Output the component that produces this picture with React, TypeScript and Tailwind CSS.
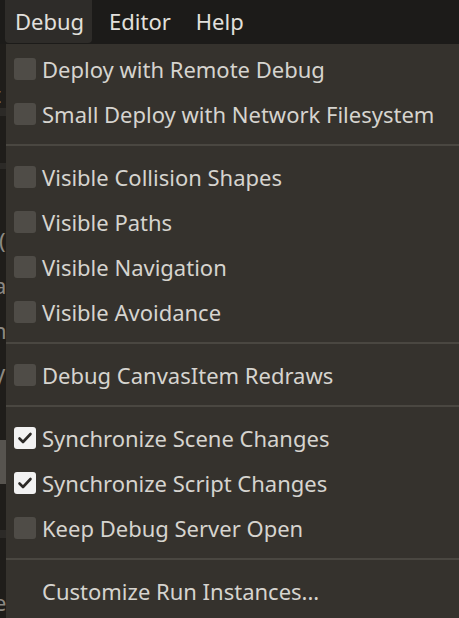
import React from "react";

type Item = { label: string; check?: boolean | null };

const groups: Item[][] = [
  [
    { label: "Deploy with Remote Debug", check: false },
    { label: "Small Deploy with Network Filesystem", check: false },
  ],
  [
    { label: "Visible Collision Shapes", check: false },
    { label: "Visible Paths", check: false },
    { label: "Visible Navigation", check: false },
    { label: "Visible Avoidance", check: false },
  ],
  [{ label: "Debug CanvasItem Redraws", check: false }],
  [
    { label: "Synchronize Scene Changes", check: true },
    { label: "Synchronize Script Changes", check: true },
    { label: "Keep Debug Server Open", check: false },
  ],
  [{ label: "Customize Run Instances...", check: null }],
];

function Box({ checked }: { checked: boolean }) {
  if (checked) {
    return (
      <div className="w-[22px] h-[22px] rounded-[3px] bg-[#f2f2f2] flex items-center justify-center">
        <svg width="16" height="16" viewBox="0 0 16 16">
          <path d="M2.5 8.5 L6 12 L13.5 4" fill="none" stroke="#2b2926" strokeWidth="2.6" strokeLinecap="round" strokeLinejoin="round" />
        </svg>
      </div>
    );
  }
  return <div className="w-[22px] h-[22px] rounded-[3px] bg-[#4f4c47]" />;
}

export default function App() {
  return (
    <div
      className="relative w-[459px] h-[618px] overflow-hidden bg-[#1f1d1a] text-[#d6d4cf]"
      style={{ fontFamily: '"Noto Sans", "Open Sans", sans-serif' }}
    >
      {/* background fragments behind the menu */}
      <div className="absolute left-0 top-[60px] w-[6px] h-[560px] overflow-hidden text-[22px] text-[#8c8983]">
        <div className="absolute top-[18px] left-[-7px]">t</div>
        <div className="absolute top-[48px] left-0 w-[6px] h-[8px] bg-[#2c2a27]" />
        <div className="absolute top-[103px] left-0 w-[6px] h-[6px] bg-[#2c2a27]" />
        <div className="absolute top-[164px] left-[-1px]">(</div>
        <div className="absolute top-[209px] left-[-6px]">a</div>
        <div className="absolute top-[254px] left-[-7px]">n</div>
        <div className="absolute top-[300px] left-[-8px]">V</div>
        <div className="absolute top-[380px] left-0 w-[6px] h-[44px] bg-[#57544f]" />
        <div className="absolute top-[470px] left-0 w-[6px] h-[8px] bg-[#2c2a27]" />
        <div className="absolute top-[526px] left-[-6px]">e</div>
      </div>

      {/* menu bar */}
      <div className="relative h-[44px] bg-[#1c1b19] flex items-start pl-[5px] text-[22px] text-[#e2e0dc]">
        <div className="h-[43px] w-[87px] rounded-b-[4px] bg-[#2e2c29] flex items-center pl-[10px]">Debug</div>
        <div className="h-[43px] flex items-center pl-[17px]">Editor</div>
        <div className="h-[43px] flex items-center pl-[25px]">Help</div>
      </div>

      {/* dropdown */}
      <div className="absolute left-[6px] top-[44px] right-0 bottom-0 bg-[#35322d] pt-[2px] text-[22px]">
        {groups.map((g, gi) => (
          <div key={gi}>
            {gi > 0 && (
              <div className="h-[18px] flex items-center">
                <div className="h-[2px] w-full bg-[#4a4741]" />
              </div>
            )}
            {g.map((it) => (
              <div key={it.label} className="h-[45px] flex items-center pl-[8px]">
                <div className="w-[22px] h-[22px] mr-[6px]">
                  {it.check !== null && it.check !== undefined && <Box checked={it.check} />}
                </div>
                <span className="leading-none">{it.label}</span>
              </div>
            ))}
          </div>
        ))}
      </div>
    </div>
  );
}
